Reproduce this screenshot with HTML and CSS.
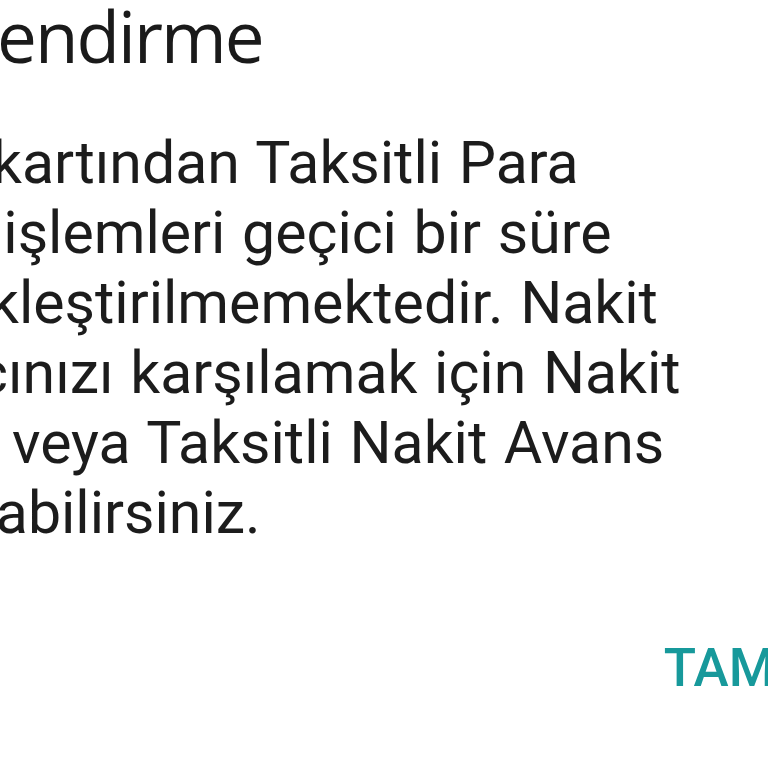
FILE: index.html
```html
<!DOCTYPE html>
<html lang="tr">
<head>
<meta charset="utf-8">
<link rel="stylesheet" href="styles.css">
</head>
<body>
<div class="dialog">
  <h1 class="title">Bilgilendirme</h1>
  <div class="message">
    <div class="line l1">Kredi kartından Taksitli Para</div>
    <div class="line l2">Çekim işlemleri geçici bir süre</div>
    <div class="line">gerçekleştirilmemektedir. Nakit</div>
    <div class="line l4">ihtiyacınızı karşılamak için Nakit</div>
    <div class="line l5">Avans veya Taksitli Nakit Avans</div>
    <div class="line l6">kullanabilirsiniz.</div>
  </div>
  <div class="actions">
    <button class="btn">TAMAM</button>
  </div>
</div>
</body>
</html>
```
FILE: styles.css
```css
html, body {
  margin: 0;
  padding: 0;
  background: #ffffff;
  overflow: hidden;
  width: 768px;
  height: 768px;
}
.dialog {
  margin-left: -157px;
  width: 1014px;
  display: flex;
  flex-direction: column;
}
.title {
  margin: -6px 0 0 10px;
  font-family: "Open Sans", "Noto Sans", sans-serif;
  font-weight: 400;
  font-size: 71px;
  letter-spacing: -2px;
  line-height: 84px;
  color: #1a1a1a;
}
.message {
  margin-top: 50px;
  font-family: Roboto, sans-serif;
  font-size: 59px;
  line-height: 70px;
  word-spacing: 2px;
  color: #1c1c1c;
  white-space: nowrap;
}
.l1 { margin-left: -3px; }
.l2 { margin-left: -22px; }
.l4 { margin-left: -6px; }
.l5 { margin-left: -8px; }
.l6 { margin-left: -3px; }
.actions {
  display: flex;
  justify-content: flex-end;
  margin-top: 90px;
}
.btn {
  border: none;
  background: none;
  padding: 0;
  font-family: Roboto, sans-serif;
  font-weight: 500;
  font-size: 53px;
  line-height: 60px;
  color: #17999b;
}
```
